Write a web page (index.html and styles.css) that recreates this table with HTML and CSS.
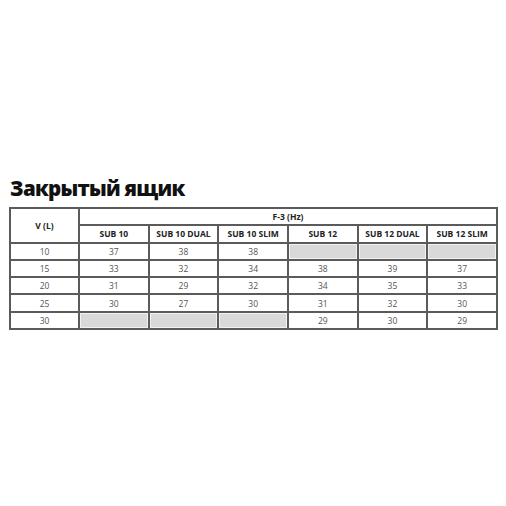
FILE: index.html
```html
<!DOCTYPE html>
<html lang="ru">
<head>
<meta charset="utf-8">
<link rel="stylesheet" href="styles.css">
</head>
<body>
<div class="page">
  <h1 class="title">Закрытый ящик</h1>
  <table class="grid">
    <colgroup>
      <col class="c-first">
      <col><col><col><col><col><col>
    </colgroup>
    <thead>
      <tr>
        <th rowspan="2" class="head">V (L)</th>
        <th colspan="6" class="head">F-3 (Hz)</th>
      </tr>
      <tr>
        <th class="head">SUB 10</th>
        <th class="head">SUB 10 DUAL</th>
        <th class="head">SUB 10 SLIM</th>
        <th class="head">SUB 12</th>
        <th class="head">SUB 12 DUAL</th>
        <th class="head">SUB 12 SLIM</th>
      </tr>
    </thead>
    <tbody>
      <tr><td>10</td><td>37</td><td>38</td><td>38</td><td class="na"></td><td class="na"></td><td class="na"></td></tr>
      <tr><td>15</td><td>33</td><td>32</td><td>34</td><td>38</td><td>39</td><td>37</td></tr>
      <tr><td>20</td><td>31</td><td>29</td><td>32</td><td>34</td><td>35</td><td>33</td></tr>
      <tr><td>25</td><td>30</td><td>27</td><td>30</td><td>31</td><td>32</td><td>30</td></tr>
      <tr><td>30</td><td class="na"></td><td class="na"></td><td class="na"></td><td>29</td><td>30</td><td>29</td></tr>
    </tbody>
  </table>
</div>
</body>
</html>
```
FILE: styles.css
```css
html, body {
  margin: 0;
  padding: 0;
  background: #ffffff;
}
.page {
  padding: 176px 8px 0 9px;
  font-family: "Open Sans", "Liberation Sans", sans-serif;
}
.title {
  margin: 0 0 6px 1px;
  font-size: 20.5px;
  line-height: 25px;
  font-weight: 800;
  color: #111;
  letter-spacing: -0.75px;
}
.grid {
  border-collapse: collapse;
  table-layout: fixed;
  width: 489px;
}
.c-first {
  width: 69px;
}
.grid th, .grid td {
  border: 2px solid #5b5b5b;
  height: 15.3px;
  padding: 0;
  text-align: center;
  vertical-align: middle;
  font-size: 8.5px;
  line-height: 15px;
}
.grid .head {
  font-weight: 700;
  color: #222;
}
.grid td {
  color: #555;
  font-weight: 400;
}
.grid td.na {
  background: #d9d9d9;
  box-shadow: inset 0 0 0 1px #f2f2f2;
}
```
